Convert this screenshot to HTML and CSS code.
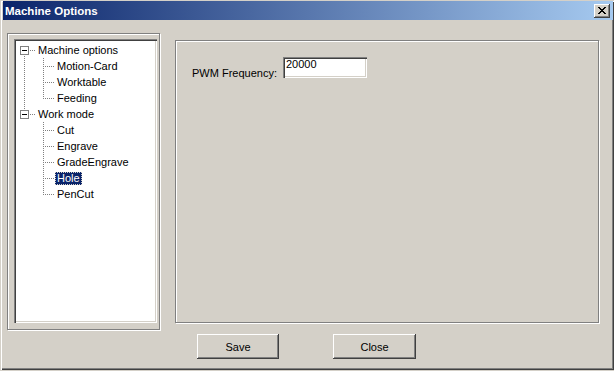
FILE: index.html
```html
<!DOCTYPE html>
<html lang="en">
<head>
    <meta charset="utf-8" />
    <title>Machine Options</title>
    <link rel="stylesheet" href="styles.css">
</head>
<body>

    <div class="window">
        <!-- caption -->
        <div class="titlebar">
            <span class="title">Machine Options</span>
            <button class="close">
                <svg width="8" height="7" viewBox="0 0 8 7"><path d="M0 0h2v1h-2z M6 0h2v1h-2z M1 1h2v1h-2z M5 1h2v1h-2z M2 2h4v1h-4z M3 3h2v1h-2z M2 4h4v1h-4z M1 5h2v1h-2z M5 5h2v1h-2z M0 6h2v1h-2z M6 6h2v1h-2z" fill="#000"/></svg>
            </button>
        </div>

        <div class="main">
            <!-- tree -->
            <div class="frame frame--tree">
                <div class="tree">
                    <div class="tree__row">
                        <span class="cell cell--down"><span class="cell__box"></span></span>
                        <span class="tree__label">Machine options</span>
                    </div>
                    <div class="tree__row">
                        <span class="cell cell--pass"></span>
                        <span class="cell cell--mid"></span>
                        <span class="tree__label">Motion-Card</span>
                    </div>
                    <div class="tree__row">
                        <span class="cell cell--pass"></span>
                        <span class="cell cell--mid"></span>
                        <span class="tree__label">Worktable</span>
                    </div>
                    <div class="tree__row">
                        <span class="cell cell--pass"></span>
                        <span class="cell cell--up"></span>
                        <span class="tree__label">Feeding</span>
                    </div>
                    <div class="tree__row">
                        <span class="cell cell--up"><span class="cell__box"></span></span>
                        <span class="tree__label">Work mode</span>
                    </div>
                    <div class="tree__row">
                        <span class="cell"></span>
                        <span class="cell cell--mid"></span>
                        <span class="tree__label">Cut</span>
                    </div>
                    <div class="tree__row">
                        <span class="cell"></span>
                        <span class="cell cell--mid"></span>
                        <span class="tree__label">Engrave</span>
                    </div>
                    <div class="tree__row">
                        <span class="cell"></span>
                        <span class="cell cell--mid"></span>
                        <span class="tree__label">GradeEngrave</span>
                    </div>
                    <div class="tree__row">
                        <span class="cell"></span>
                        <span class="cell cell--mid"></span>
                        <span class="tree__label tree__label--selected">Hole</span>
                    </div>
                    <div class="tree__row">
                        <span class="cell"></span>
                        <span class="cell cell--up"></span>
                        <span class="tree__label">PenCut</span>
                    </div>
                </div>
            </div>

            <!-- options page -->
            <div class="frame frame--opts">
                <div class="field-row">
                    <span class="field-row__label">PWM Frequency:</span>
                    <div class="field">20000</div>
                </div>
            </div>
        </div>

        <div class="buttons">
            <button class="btn btn--save">Save</button>
            <button class="btn btn--close">Close</button>
        </div>
    </div>

</body>
</html>
```

FILE: styles.css
```css
* {
    box-sizing: border-box; margin: 0; padding: 0;
}
body {
    background: #d4d0c8;
    font: 11px "Liberation Sans", Arial, sans-serif;
    color: #000;
}
.window {
    width: 614px;
    height: 370px;
    padding-top: 1px;
    box-shadow: inset 1px 1px #d4d0c8, inset 2px 2px #fff, inset -1px -1px #404040, inset -2px -2px #808080;
}

/* caption */
.titlebar {
    height: 19px;
    margin: 0 1px 0 3px;
    padding: 0 3px 0 2px;
    display: flex;
    align-items: center;
    justify-content: space-between;
    background: linear-gradient(to right, #0a246a 0%, #a6caf0 100%);
    color: #fff;
}
.title {
    font-weight: bold;
    font-size: 11.5px;
}
.close {
    width: 16px;
    height: 14px;
    border: 0;
    background: #d4d0c8;
    display: flex;
    align-items: center;
    justify-content: center;
    box-shadow: inset -1px -1px #404040, inset 1px 1px #fff, inset -2px -2px #808080;
}

/* frames */
.main {
    display: flex;
    align-items: flex-start;
    gap: 15px;
    padding: 13px 0 0 7px;
}
.frame {
    border: 1px solid #808080;
    box-shadow: inset 1px 1px #fff, 1px 1px #fff;
}
.frame--tree {
    width: 153px;
    height: 297px;
    padding: 5px 2px 6px 6px;
}
.frame--opts {
    width: 424px;
    height: 283px;
    margin-top: 7px;
    padding: 16px 0 0 16px;
}

/* tree */
.tree {
    height: 100%;
    padding: 3px 2px 2px;
    background: #fff;
    box-shadow: inset 1px 1px #808080, inset 2px 2px #404040, inset -1px -1px #fff, inset -2px -2px #d4d0c8;
}
.tree__row {
    display: flex;
    align-items: center;
    height: 16px;
}
.cell {
    position: relative;
    flex: none;
    width: 19px;
    height: 16px;
}
.cell--pass:before, .cell--mid:before, .cell--up:before, .cell--down:before {
    content: "";
    position: absolute;
    left: 8px;
    top: 0;
    width: 1px;
    height: 16px;
    background: repeating-linear-gradient(to bottom, #808080 0 1px, transparent 1px 2px);
}
.cell--up:before {
    height: 9px;
}
.cell--down:before {
    top: 8px;
    height: 8px;
}
.cell--mid:after, .cell--up:after, .cell--down:after {
    content: "";
    position: absolute;
    left: 9px;
    top: 8px;
    width: 10px;
    height: 1px;
    background: repeating-linear-gradient(to right, transparent 0 1px, #808080 1px 2px);
}
.cell__box {
    position: absolute;
    left: 4px;
    top: 4px;
    width: 9px;
    height: 9px;
    border: 1px solid #808080;
    background: #fff;
    z-index: 1;
}
.cell__box:before {
    content: "";
    position: absolute;
    left: 1px;
    top: 3px;
    width: 5px;
    height: 1px;
    background: #000;
}
.tree__label {
    margin-left: 1px;
    padding: 0 2px;
    height: 13px;
    line-height: 13px;
    white-space: nowrap;
}
.tree__label--selected {
    background: #0a246a;
    color: #fff;
    outline: 1px dotted #d4d0c8;
    outline-offset: -1px;
}

/* options */
.field-row {
    display: flex;
    align-items: flex-start;
}
.field-row__label {
    width: 91px;
    margin-top: 11px;
    line-height: 11px;
}
.field {
    width: 84px;
    height: 21px;
    padding: 2px 3px 0;
    line-height: 11px;
    background: #fff;
    box-shadow: inset 1px 1px #808080, inset 2px 2px #404040, inset -1px -1px #fff, inset -2px -2px #d4d0c8;
}

/* buttons */
.buttons {
    display: flex;
    gap: 54px;
    padding: 4px 0 0 197px;
}
.btn {
    width: 82px;
    height: 25px;
    border: 0;
    background: #d4d0c8;
    font: inherit;
    color: #000;
    box-shadow: inset -1px -1px #404040, inset 1px 1px #fff, inset -2px -2px #808080;
}
.btn--close {
    width: 83px;
}
```
